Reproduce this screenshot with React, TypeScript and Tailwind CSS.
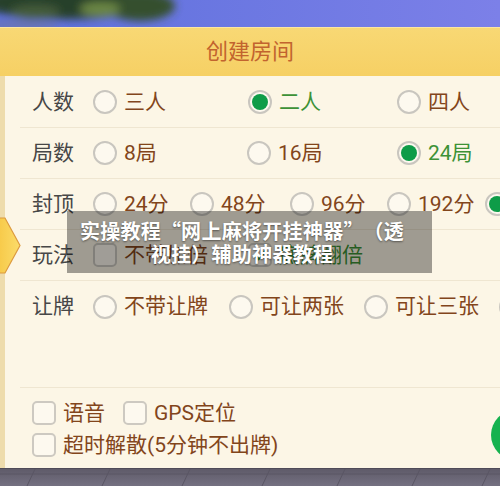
import React from 'react';

const TEXT_FONT = "font-['Roboto','Noto_Sans_CJK_SC',sans-serif]";

const Radio = ({ on }: { on?: boolean }) => (
  <span className="flex h-[24px] w-[24px] shrink-0 items-center justify-center rounded-full border-2 border-[#c9c6bf] bg-[#fdf9ef]">
    {on && <span className="h-[16px] w-[16px] rounded-full bg-[#0e9c48]" />}
  </span>
);

const Check = ({ on }: { on?: boolean }) => (
  <span className="flex h-[24px] w-[24px] shrink-0 items-center justify-center rounded-[5px] border-2 border-[#cdc9c1] bg-[#fdf9ef]">
    {on && (
      <svg width="16" height="16" viewBox="0 0 16 16">
        <path d="M3 8.5 L6.5 12 L13 4.5" fill="none" stroke="#0e9c48" strokeWidth="2.6" strokeLinecap="round" strokeLinejoin="round" />
      </svg>
    )}
  </span>
);

interface OptionProps {
  label: string;
  on?: boolean;
  w?: string;
  box?: boolean;
}

const Option = ({ label, on, w = '', box }: OptionProps) => (
  <div className={`flex shrink-0 items-center gap-[7px] ${w}`}>
    {box ? <Check on={on} /> : <Radio on={on} />}
    <span className={`whitespace-nowrap ${on ? 'text-[#3d9236]' : 'text-[#82451b]'}`}>{label}</span>
  </div>
);

const Row = ({ label, last, children }: { label: string; last?: boolean; children: React.ReactNode }) => (
  <div
    className={`ml-[15px] flex h-[51px] items-center overflow-hidden pl-[12px] ${
      last ? '' : 'border-b border-[#efe6d1]'
    }`}
  >
    <span className="w-[61px] shrink-0 text-[#474747]">{label}</span>
    {children}
  </div>
);

export default function App() {
  return (
    <div className={`relative flex h-[486px] w-[500px] flex-col overflow-hidden bg-[#fcf6e6] text-[21px] leading-none ${TEXT_FONT}`}>
      {/* sky with blurred tree */}
      <div className="h-[27px] shrink-0">
        <svg width="500" height="27" viewBox="0 0 500 27">
          <defs>
            <linearGradient id="sky" x1="0" x2="1" y1="0" y2="0">
              <stop offset="0" stopColor="#5d70dc" />
              <stop offset="1" stopColor="#7c80e8" />
            </linearGradient>
            <filter id="blur" x="-20%" y="-50%" width="140%" height="200%">
              <feGaussianBlur stdDeviation="4" />
            </filter>
          </defs>
          <rect width="500" height="27" fill="url(#sky)" />
          <g filter="url(#blur)">
            <ellipse cx="65" cy="2" rx="85" ry="17" fill="#27402a" />
            <ellipse cx="140" cy="6" rx="35" ry="15" fill="#354f2e" />
            <ellipse cx="100" cy="9" rx="20" ry="7" fill="#6c8744" />
            <ellipse cx="35" cy="12" rx="25" ry="7" fill="#445b3a" />
            <ellipse cx="20" cy="26" rx="40" ry="5" fill="#6a76b2" />
          </g>
        </svg>
      </div>

      {/* title bar */}
      <div className="flex h-[49px] shrink-0 items-center justify-center border-t border-[#fbe6a2] bg-gradient-to-b from-[#f8d874] to-[#f6d064]">
        <span className="text-[22px] text-[#c2642e]">创建房间</span>
      </div>

      {/* settings panel */}
      <div className="flex h-[392px] shrink-0">
        <div className="w-[5px] shrink-0 bg-[#eedcac]" />
        <div className="min-w-0 flex-1 bg-[#fcf6e6] pt-[1px]">
          <Row label="人数">
            <Option label="三人" w="w-[155px]" />
            <Option label="二人" w="w-[149px]" on />
            <Option label="四人" />
          </Row>
          <Row label="局数">
            <Option label="8局" w="w-[154px]" />
            <Option label="16局" w="w-[150px]" />
            <Option label="24局" on />
          </Row>
          <Row label="封顶">
            <Option label="24分" w="w-[97px]" />
            <Option label="48分" w="w-[100px]" />
            <Option label="96分" w="w-[97px]" />
            <Option label="192分" w="w-[98px]" />
            <Option label="384分" on />
          </Row>
          <Row label="玩法">
            <Option label="不带加倍" w="w-[155px]" box />
            <Option label="底牌翻倍" box on />
          </Row>
          <Row label="让牌" last>
            <Option label="不带让牌" w="w-[136px]" />
            <Option label="可让两张" w="w-[135px]" />
            <Option label="可让三张" w="w-[135px]" />
            <Option label="可让四张" />
          </Row>
          <div className="ml-[15px] h-[56px] border-b border-[#efe6d1]" />

          <div className="flex flex-col gap-[8px] pl-[27px] pt-[13px]">
            <div className="flex h-[24px] items-center">
              <Option label="语音" w="w-[91px]" box />
              <Option label="GPS定位" box />
            </div>
            <div className="flex h-[24px] items-center">
              <Option label="超时解散(5分钟不出牌)" box />
            </div>
          </div>
        </div>
      </div>

      {/* floor */}
      <div className="h-[18px] shrink-0 bg-gradient-to-b from-[#5e5a68] to-[#747081]">
        <svg width="500" height="18" viewBox="0 0 500 18">
          <line x1="0" y1="0.5" x2="500" y2="0.5" stroke="#4f4b58" strokeWidth="1" />
          <line x1="0" y1="6" x2="500" y2="6" stroke="#5a5664" strokeWidth="1" />
          {[35, 110, 190, 270, 345, 420, 490].map((x) => (
            <line key={x} x1={x} y1="1" x2={x - 8} y2="18" stroke="#5a5664" strokeWidth="1" />
          ))}
        </svg>
      </div>

      {/* yellow side tab */}
      <svg className="absolute left-0 top-[217px]" width="22" height="58" viewBox="0 0 22 58">
        <defs>
          <linearGradient id="tab" x1="0" x2="1" y1="0" y2="0">
            <stop offset="0" stopColor="#f7c948" />
            <stop offset="1" stopColor="#fbdc6a" />
          </linearGradient>
        </defs>
        <path d="M-2 1 H5 L20 28.5 L5 56 H-2 Z" fill="url(#tab)" stroke="#dc9a3e" strokeWidth="1.2" />
      </svg>

      {/* green round button */}
      <div className="absolute left-[491px] top-[410px] h-[50px] w-[50px] rounded-full bg-[#16b24f]" />

      {/* watermark */}
      <div className="absolute left-[67px] top-[211px] h-[62px] w-[365px] bg-[rgba(0,0,0,0.37)] pb-[8px] pl-[10px] pr-[25px] pt-[8px] text-center font-['Noto_Sans_CJK_SC',sans-serif] text-[20px] font-bold leading-[23px] tracking-[0.3px] text-white [text-shadow:0_1px_2px_rgba(0,0,0,0.45)]">
        实操教程<span className="inline-block w-[20px] text-right">“</span>网上麻将开挂神器<span className="inline-block w-[20px] text-left">”</span>（透视挂）辅助神器教程
      </div>
    </div>
  );
}
